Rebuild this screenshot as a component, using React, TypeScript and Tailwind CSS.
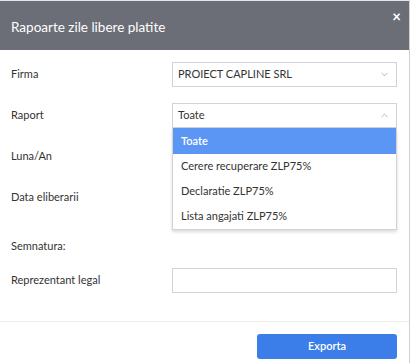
import { ChevronDown, ChevronUp } from 'lucide-react'

const OPTIONS = ['Toate', 'Cerere recuperare ZLP75%', 'Declaratie ZLP75%', 'Lista angajati ZLP75%']

function Select({ value, open }: { value: string; open?: boolean }) {
  return (
    <div className="flex h-[25px] items-center justify-between border border-[#d3d3d3] bg-white pl-[5px] pr-[6px] text-[11px] text-[#333]">
      <span>{value}</span>
      {open ? (
        <ChevronUp size={11} strokeWidth={1.5} className="text-[#999]" />
      ) : (
        <ChevronDown size={11} strokeWidth={1.5} className="text-[#999]" />
      )}
    </div>
  )
}

export default function App() {
  return (
    <div
      className="relative h-[363px] w-[411px] overflow-hidden bg-white"
      style={{ fontFamily: 'Lato, "Open Sans", sans-serif' }}
    >
      <div className="w-[410px] border-r border-[#cfcfcf] h-full">
        {/* Header */}
        <div className="relative h-[50px] border-t border-[#e6e6e6] bg-[#6b6e76]">
          <h1 className="absolute left-[11px] top-[16px] text-[13.5px] text-white">Rapoarte zile libere platite</h1>
          <span className="absolute right-[8px] top-[4px] text-[15px] font-bold text-white">×</span>
        </div>

        {/* Body */}
        <div className="px-[11px] pt-[12px] pb-[28px] text-[11px] text-[#333]">
          <div className="grid grid-cols-[161px_225px] items-center mb-[16px]">
            <span>Firma</span>
            <Select value="PROIECT CAPLINE SRL" />
          </div>

          <div className="grid grid-cols-[161px_225px] items-center mb-[16px]">
            <span>Raport</span>
            <div className="relative">
              <Select value="Toate" open />
              <div className="absolute left-0 right-0 top-[25px] z-10 border border-t-0 border-[#d3d3d3] bg-white shadow-[0_2px_3px_rgba(0,0,0,0.15)]">
                {OPTIONS.map((o, i) => (
                  <div
                    key={o}
                    className={`flex items-center pl-[8px] ${
                      i === 0 ? 'h-[26px] bg-[#5b96f4] font-semibold text-white' : 'h-[25px] text-[#333]'
                    }`}
                  >
                    {o}
                  </div>
                ))}
              </div>
            </div>
          </div>

          <div className="grid grid-cols-[161px_225px] items-center mb-[16px]">
            <span>Luna/An</span>
            <div className="h-[25px] border border-[#d3d3d3]" />
          </div>

          <div className="grid grid-cols-[161px_225px] items-center mb-[28px]">
            <span>Data eliberarii</span>
            <div className="h-[25px] border border-[#d3d3d3]" />
          </div>

          <div className="mb-[14px] leading-[16px]">Semnatura:</div>

          <div className="grid grid-cols-[161px_225px] items-center">
            <span>Reprezentant legal</span>
            <div className="h-[25px] border border-[#d3d3d3]" />
          </div>
        </div>

        {/* Footer */}
        <div className="flex justify-end border-t border-[#ececec] pt-[12px] pr-[12px]">
          <button className="h-[25px] w-[140px] rounded-[3px] bg-[#3b7ee9] text-[11px] font-semibold text-white">
            Exporta
          </button>
        </div>
      </div>
    </div>
  )
}
